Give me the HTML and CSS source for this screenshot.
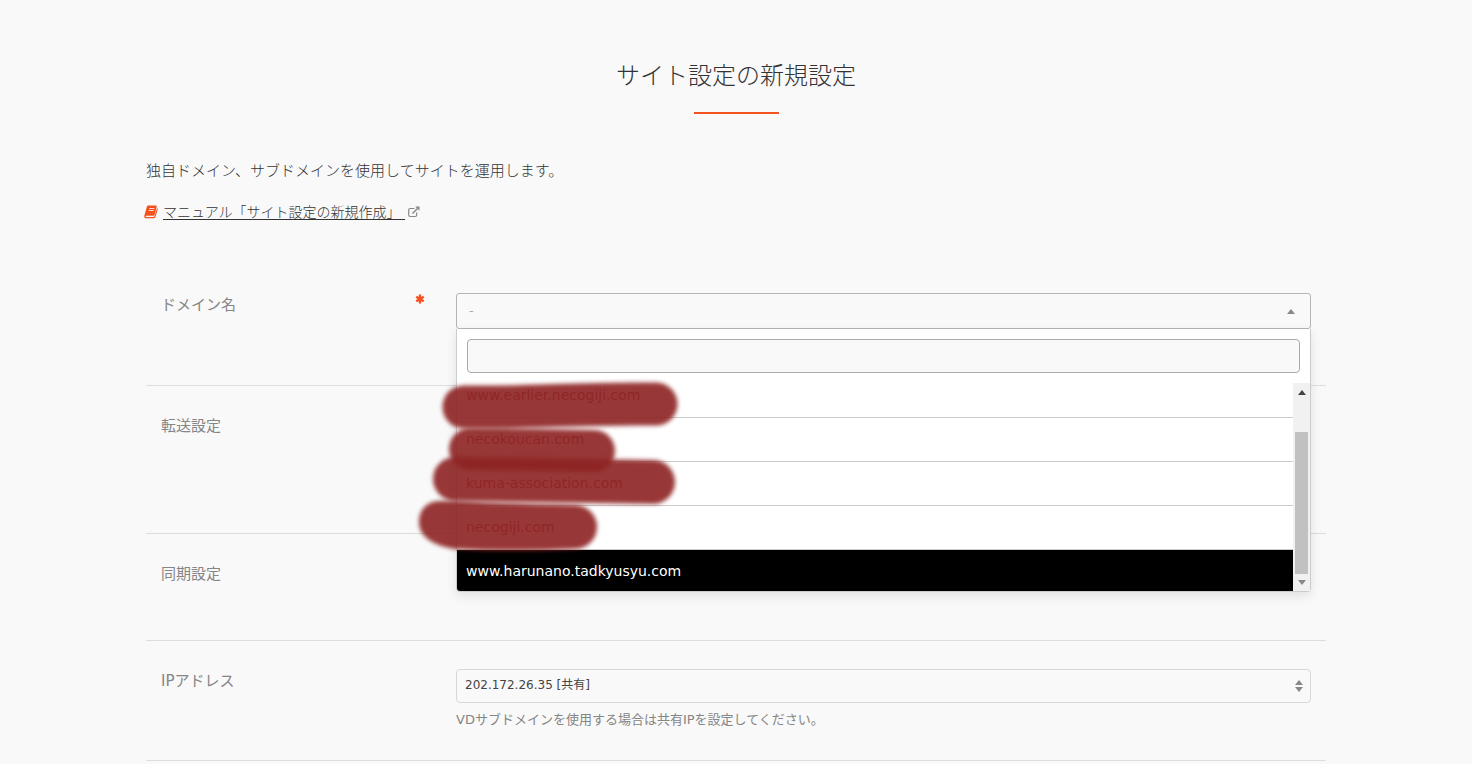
FILE: index.html
```html
<!DOCTYPE html>
<html lang="ja">
<head>
<meta charset="utf-8">
<title>サイト設定の新規設定</title>
<link rel="stylesheet" href="styles.css">
</head>
<body>
<main class="page">
  <h1 class="title">サイト設定の新規設定</h1>
  <p class="lead">独自ドメイン、サブドメインを使用してサイトを運用します。</p>
  <p class="manual">
    <svg class="book" viewBox="0 0 14 14" aria-hidden="true"><path d="M4.200 .5h7.600c.8 0 1.100.6.9 1.300L10.600 9.700c-.2.700-.7 1-1.300 1H2.100c-.5 0-.8.4-.6.9.1.3.4.4.8.4h7.100c.5 0 .9-.3 1.100-.8L13.100 3c.6.3.8.8.6 1.500l-2.200 7.300c-.3.900-1 1.500-1.900 1.500H2C.8 13.300-.1 12 .3 10.800L2.800 2C3 1 3.500.5 4.200.5z" fill="#f4511e"/><path d="M5.300 3.500h5M4.700 5.500h5" stroke="#fff" stroke-width=".8"/></svg>
    <a class="manual-link" href="#manual">マニュアル「サイト設定の新規作成」&nbsp;</a>
    <svg class="external" viewBox="0 0 12 12" aria-hidden="true"><path d="M6.500 2.500H2.200C1.400 2.500.7 3.200.7 4v5c0 .8.700 1.500 1.500 1.500h5C8 10.500 8.700 9.800 8.700 9V6.500" fill="none" stroke="#888" stroke-width="1.200"/><path d="M4.500 7.500 9.500 2.500" stroke="#888" stroke-width="1.500"/><path d="M7.200.5h4.300v4.300z" fill="#888"/></svg>
  </p>

  <form class="settings">
    <div class="row row-domain">
      <div class="label">
        <label id="domain-label" for="domain">ドメイン名</label>
        <svg class="required" viewBox="0 0 10 10" role="img" aria-label="必須"><path d="M5 .6v8.800M1.200 2.800l7.600 4.400M8.800 2.800 1.200 7.200" stroke="#f4511e" stroke-width="2.400"/></svg>
      </div>
      <div class="field">
        <button class="combo" id="domain" type="button" aria-haspopup="listbox" aria-expanded="true"><span>-</span><i class="up"></i></button>
        <div class="menu">
          <div class="search"><input class="search-input" type="text" aria-label="ドメインを検索"></div>
          <div class="results">
            <ul class="options" role="listbox" aria-labelledby="domain-label">
              <li class="option option-first" role="option">www.earlier.necogiji.com</li>
              <li class="option" role="option">necokoucan.com</li>
              <li class="option" role="option">kuma-association.com</li>
              <li class="option" role="option">necogiji.com</li>
              <li class="option active" role="option" aria-selected="true">www.harunano.tadkyusyu.com</li>
            </ul>
            <div class="scrollbar"><i class="up dark"></i><i class="thumb"></i><i class="down"></i></div>
          </div>
          <svg class="marker" viewBox="410 370 280 190" aria-hidden="true">
            <path d="M464 407C540 408 570 403 656 404" stroke-width="43"/>
            <path d="M470 449 Q530 449 594 451" stroke-width="42"/>
            <path d="M455 479 Q550 480 653 482" stroke-width="44"/>
            <path d="M440 501H460Q510 504 575 505A22 22 0 0 1 575 549Q510 552 455 549C430 545 419 535 419 522S428 501 440 501Z" class="blot"/>
          </svg>
        </div>
      </div>
    </div>
    <div class="row row-forward"><div class="label">転送設定</div></div>
    <div class="row row-sync"><div class="label">同期設定</div></div>
    <div class="row row-ip">
      <div class="label"><label for="ip">IPアドレス</label></div>
      <div class="field">
        <div class="select-box">
          <select class="select" id="ip"><option>202.172.26.35 [共有]</option></select>
          <span class="arrows"><i class="up"></i><i class="down"></i></span>
        </div>
        <p class="hint">VDサブドメインを使用する場合は共有IPを設定してください。</p>
      </div>
    </div>
  </form>
</main>
</body>
</html>
```
FILE: styles.css
```css
* { box-sizing: border-box; }
body {
  margin: 0;
  background: #f9f9f9;
  color: #333;
  font: 400 15px/22px "DejaVu Sans", "Noto Sans CJK JP", sans-serif;
}
.page { max-width: 1180px; margin: 0 auto; padding-top: 60px; }
.title {
  display: flex;
  flex-direction: column;
  align-items: center;
  gap: 20px;
  margin: 0 0 46px;
  font-size: 24px;
  font-weight: 300;
  line-height: 32px;
}
.title::after { content: ""; width: 85px; height: 2px; background: #f4511e; }
.lead { margin: 0 0 20px; font-weight: 300; }
.manual { display: flex; align-items: center; margin: 0 0 43px; font-size: 14px; font-weight: 300; line-height: 20px; }
.book { width: 14px; height: 14px; margin: 0 5px 0 -2px; }
.manual-link { color: #333; text-underline-offset: 2px; }
.external { width: 12px; height: 12px; margin-left: 3px; }

.settings { color: #858585; }
.row { display: flex; padding: 28px 15px; border-bottom: 1px solid #ddd; }
.row-domain { min-height: 121px; }
.row-forward { min-height: 148px; }
.row-sync { min-height: 107px; }
.row-ip { min-height: 120px; }
.label { display: flex; flex: 0 0 295px; justify-content: space-between; padding: 1px 31px 0 0; }
.required { width: 10px; height: 10px; }
.field { position: relative; flex: 1; min-width: 0; }

.up, .down { width: 0; height: 0; border: 4px solid transparent; }
.up { border-top: 0; border-bottom: 5px solid #888; }
.down { border-bottom: 0; border-top: 5px solid #888; }
.up.dark { border-bottom-color: #444; }

.combo {
  display: flex;
  align-items: center;
  justify-content: space-between;
  width: 100%;
  height: 36px;
  padding: 0 15px 0 12px;
  border: 1px solid #b5b5b5;
  border-radius: 3px;
  background: #f9f9f9;
  color: #aaa;
  font: inherit;
  font-size: 13px;
}
.menu {
  position: absolute;
  top: 36px;
  left: 0;
  right: 0;
  z-index: 2;
  border: 1px solid #ccc;
  border-top: 0;
  border-radius: 0 0 4px 4px;
  background: #fff;
  box-shadow: 0 4px 12px rgba(0, 0, 0, .1);
}
.search { padding: 10px; }
.search-input {
  display: block;
  width: 100%;
  height: 34px;
  padding: 0 10px;
  border: 1px solid #aaa;
  border-radius: 4px;
  background: #f9f9f9;
}
.results { display: flex; height: 208px; }
.options { flex: 1; margin: 0; padding: 0; list-style: none; }
.option {
  height: 44px;
  padding: 10px 9px;
  border-bottom: 1px solid #ccc;
  color: #a04040;
  font-size: 14px;
  line-height: 22px;
}
.option-first { height: 35px; padding-top: 1px; }
.option.active { height: 41px; border: 0; border-bottom-left-radius: 3px; background: #000; color: #fff; }
.scrollbar {
  display: flex;
  flex-direction: column;
  justify-content: space-between;
  align-items: center;
  width: 17px;
  padding: 7px 2px 6px;
  background: #f1f1f1;
}
.thumb { width: 13px; height: 142px; margin-top: 31px; background: #c1c1c1; }
.marker {
  position: absolute;
  top: 41px;
  left: -47px;
  width: 280px;
  height: 190px;
  pointer-events: none;
}
.marker path {
  fill: none;
  stroke: #8e2424;
  stroke-linecap: round;
  opacity: .91;
  filter: blur(2px);
}
.marker .blot { fill: #8e2424; stroke: none; }

.select-box { position: relative; }
.select {
  display: block;
  width: 100%;
  height: 34px;
  padding: 0 24px 2px 8px;
  border: 1px solid #d8d8d8;
  border-radius: 4px;
  appearance: none;
  background: #f9f9f9;
  color: #444;
  font: inherit;
  font-size: 12px;
}
.arrows {
  position: absolute;
  top: 11px;
  right: 8px;
  display: flex;
  flex-direction: column;
  gap: 2px;
  pointer-events: none;
}
.hint { margin: 7px 0 0; font-size: 13px; line-height: 20px; }
```
